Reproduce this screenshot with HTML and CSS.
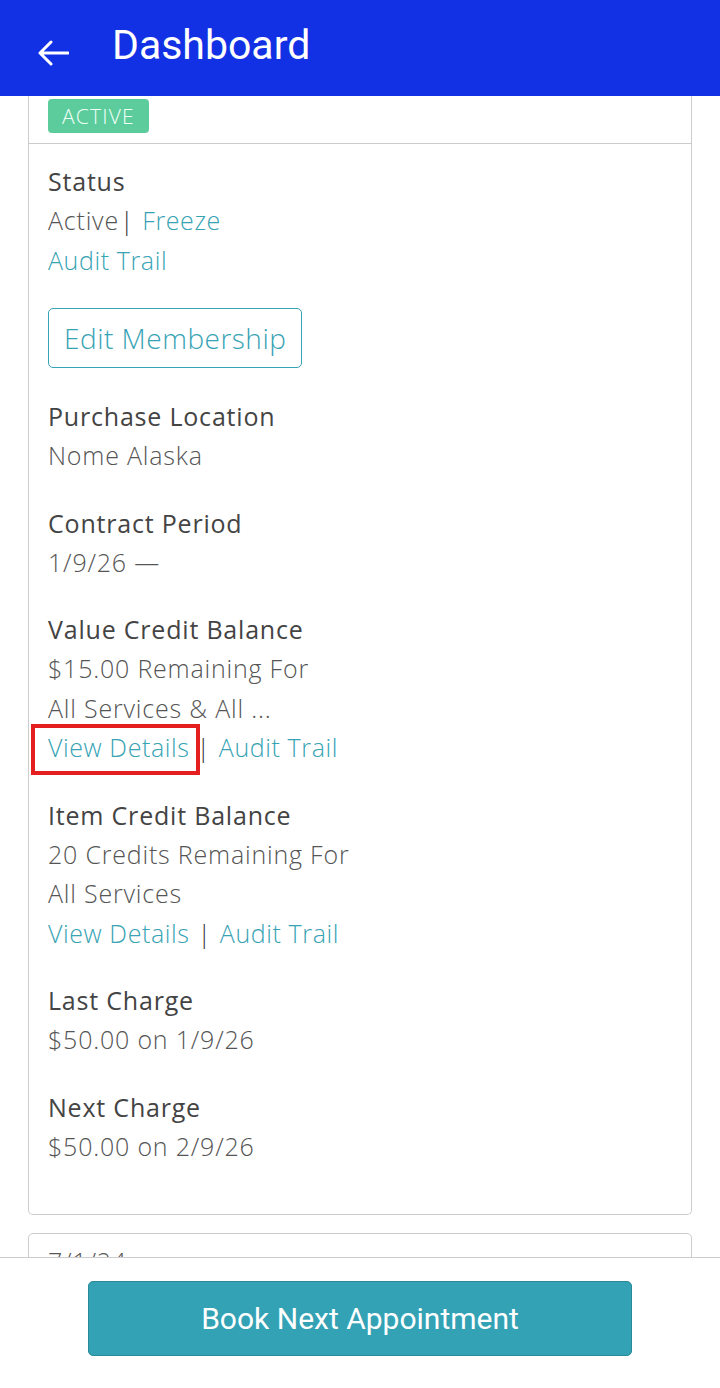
FILE: index.html
```html
<!DOCTYPE html>
<html lang="en">
<head>
<meta charset="UTF-8">
<meta name="viewport" content="width=device-width, initial-scale=1">
<title>Dashboard</title>
<link rel="stylesheet" href="styles.css">
</head>
<body>

<header class="app-bar">
  <svg class="back-icon" width="32" height="26" viewBox="0 0 32 26">
    <path d="M31 13 H3 M14 2 L3 13 L14 24" fill="none" stroke="#fff" stroke-width="3" stroke-linecap="round" stroke-linejoin="round"/>
  </svg>
  <h1>Dashboard</h1>
</header>

<main class="scroll">
  <!-- Membership Card -->
  <div class="card">
    <div class="card-head">
      <span class="badge">ACTIVE</span>
    </div>
    <div class="card-body">
      <div class="field">
        <div class="label">Status</div>
        <div class="value">Active<span class="sep">|</span><a href="#">Freeze</a></div>
        <div class="value"><a href="#">Audit Trail</a></div>
      </div>

      <button class="outline-btn">Edit Membership</button>

      <div class="field">
        <div class="label">Purchase Location</div>
        <div class="value">Nome Alaska</div>
      </div>

      <div class="field">
        <div class="label">Contract Period</div>
        <div class="value">1/9/26 —</div>
      </div>

      <div class="field">
        <div class="label">Value Credit Balance</div>
        <div class="value">$15.00 Remaining For</div>
        <div class="value">All Services &amp; All ...</div>
        <div class="value"><a href="#" class="marked">View Details</a><span class="sep">|</span><a href="#">Audit Trail</a></div>
      </div>

      <div class="field">
        <div class="label">Item Credit Balance</div>
        <div class="value">20 Credits Remaining For</div>
        <div class="value">All Services</div>
        <div class="value"><a href="#">View Details</a><span class="sep sep-wide">|</span><a href="#">Audit Trail</a></div>
      </div>

      <div class="field">
        <div class="label">Last Charge</div>
        <div class="value">$50.00 on 1/9/26</div>
      </div>

      <div class="field">
        <div class="label">Next Charge</div>
        <div class="value">$50.00 on 2/9/26</div>
      </div>
    </div>
  </div>

  <!-- Next Card (cut off by the bottom bar) -->
  <div class="card card-next">
    <div class="value">7/1/24</div>
  </div>
</main>

<footer class="bottom-bar">
  <button class="primary-btn">Book Next Appointment</button>
</footer>

</body>
</html>
```

FILE: styles.css
```css
body {
  margin: 0;
  height: 1388px;
  display: flex;
  flex-direction: column;
  font-family: "Open Sans", sans-serif;
  background: #ffffff;
  color: #555;
}

.app-bar {
  height: 96px;
  background: #1231e4;
  display: flex;
  align-items: center;
  padding-left: 37px;
  gap: 43px;
  flex-shrink: 0;
}

.back-icon {
  margin-top: 9px;
}

.app-bar h1 {
  margin: 0 0 6px;
  font-family: Roboto, sans-serif;
  font-weight: 400;
  font-size: 41px;
  color: #fff;
}

.scroll {
  flex: 1;
  overflow: hidden;
  padding: 0 28px;
}

.card {
  border: 1px solid #ccc;
  border-top: none;
  border-radius: 0 0 5px 5px;
}

.card-head {
  padding: 3px 19px 10px;
  border-bottom: 1px solid #ccc;
}

.badge {
  display: inline-block;
  background: #5ccc9c;
  color: #f0fff8;
  font-size: 21px;
  font-weight: 300;
  letter-spacing: 1.2px;
  line-height: 34px;
  padding: 0 14px 0 14px;
  border-radius: 4px;
}

.card-body {
  padding: 17px 19px 48px;
}

.field + .field {
  margin-top: 27px;
}

.label {
  font-size: 25px;
  font-weight: 500;
  letter-spacing: 0.8px;
  color: #444;
  line-height: 40px;
}

.value {
  font-size: 25px;
  font-weight: 300;
  letter-spacing: 0.8px;
  color: #555;
  line-height: 39.5px;
}

.sep {
  color: #333;
  margin: 0 8px 0 1px;
}

.sep-wide {
  margin-left: 8px;
}

a {
  color: #37a3b4;
  text-decoration: none;
  letter-spacing: 0.6px;
}

.marked {
  outline: 4px solid #e51f1f;
  padding: 2px 6px 7px 13px;
  margin-left: -13px;
}

.outline-btn {
  display: block;
  margin: 28px 0 28px;
  height: 60px;
  padding: 0 15px;
  background: #fff;
  border: 1px solid #37a3b4;
  border-radius: 5px;
  color: #37a3b4;
  font-family: "Open Sans", sans-serif;
  font-size: 28px;
  font-weight: 300;
  letter-spacing: 0.5px;
}

.card-next {
  margin-top: 18px;
  border-top: 1px solid #ccc;
  border-radius: 5px;
  padding: 8px 19px;
}

.bottom-bar {
  height: 131px;
  border-top: 1px solid #ccc;
  display: flex;
  justify-content: center;
  padding-top: 23px;
  box-sizing: border-box;
  flex-shrink: 0;
}

.primary-btn {
  width: 544px;
  height: 75px;
  background: #33a2b5;
  border: 1px solid #2a8a9a;
  border-radius: 5px;
  color: #fff;
  font-family: Roboto, sans-serif;
  font-size: 30px;
}
```
